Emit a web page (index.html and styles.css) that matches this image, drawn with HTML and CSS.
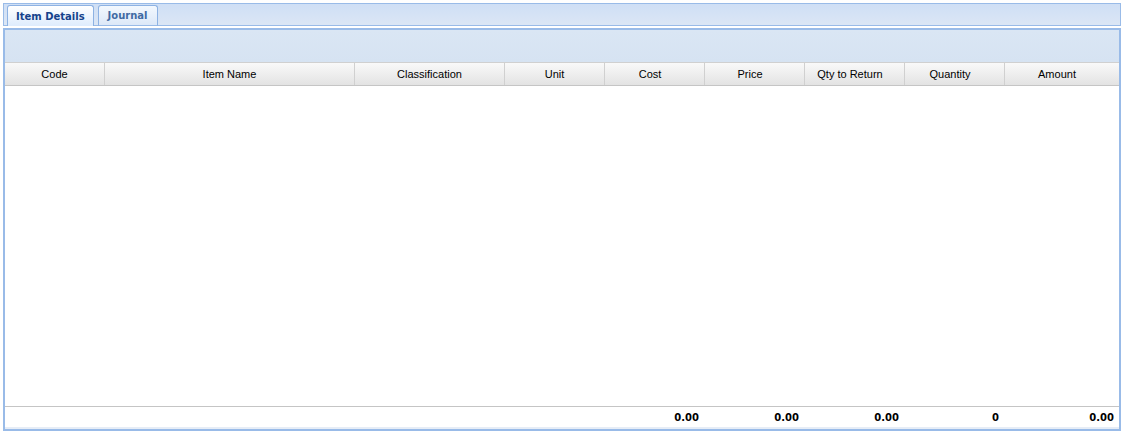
FILE: index.html
```html
<!DOCTYPE html>
<html>
<head>
<meta charset="utf-8">
<link rel="stylesheet" href="styles.css">
</head>
<body>
<div class="wrap">
  <div class="tabstrip">
    <div class="tab active">Item Details</div>
    <div class="tab">Journal</div>
  </div>
  <div class="panel">
    <div class="toolbar"></div>
    <div class="grid-head">
      <div class="hc">Code</div>
      <div class="hc">Item Name</div>
      <div class="hc">Classification</div>
      <div class="hc">Unit</div>
      <div class="hc num">Cost</div>
      <div class="hc num">Price</div>
      <div class="hc num">Qty to Return</div>
      <div class="hc num">Quantity</div>
      <div class="hc last">Amount</div>
    </div>
    <div class="grid-body"></div>
    <div class="grid-foot">
      <div class="fc"></div>
      <div class="fc"></div>
      <div class="fc"></div>
      <div class="fc"></div>
      <div class="fc">0.00</div>
      <div class="fc">0.00</div>
      <div class="fc">0.00</div>
      <div class="fc">0</div>
      <div class="fc amt">0.00</div>
    </div>
  </div>
</div>
</body>
</html>
```
FILE: styles.css
```css
html, body {
  margin: 0;
  padding: 0;
  background: #ffffff;
}
body {
  width: 1126px;
  height: 433px;
  overflow: hidden;
  font-family: "Liberation Sans", Arial, sans-serif;
}
.wrap {
  padding: 3px 5px 0 3px;
}
.tabstrip {
  height: 21px;
  border: 1px solid #99bbe8;
  background: linear-gradient(#cfdff5, #dbe6f5);
  display: flex;
  align-items: flex-end;
  gap: 4px;
  padding-left: 3px;
}
.tab {
  height: 21px;
  box-sizing: border-box;
  padding: 0 9px;
  margin-bottom: -1px;
  border: 1px solid #8db2e3;
  border-bottom: 1px solid #99bbe8;
  border-radius: 3px 3px 0 0;
  background: linear-gradient(#f3f8fe, #dce8f8);
  color: #416aa3;
  font-family: "DejaVu Sans", sans-serif;
  font-weight: bold;
  font-size: 10px;
  line-height: 20px;
}
.tab.active {
  padding: 0 8px;
  border-bottom: none;
  line-height: 21px;
  background: linear-gradient(#ffffff, #deecfd);
  color: #15428b;
}
.panel {
  margin-top: 2px;
  border: 2px solid #99bbe8;
  height: 399px;
  display: flex;
  flex-direction: column;
  background: #fff;
}
.toolbar {
  height: 32px;
  background: linear-gradient(#dae6f4, #d6e3f2);
  flex: none;
}
.grid-head, .grid-foot {
  display: grid;
  grid-template-columns: 100px 250px 150px 100px 100px 100px 100px 100px 1fr;
  flex: none;
}
.grid-head {
  height: 22px;
  background: linear-gradient(#f9f9f9, #e3e3e3);
  border-bottom: 1px solid #c5c5c5;
  border-top: 1px solid #d0d0d0;
}
.hc {
  font-size: 11px;
  color: #000;
  text-align: center;
  line-height: 22px;
  border-right: 1px solid #d0d0d0;
}
.hc.num {
  padding-right: 9px;
}
.hc.last {
  border-right: none;
  padding-right: 10px;
}
.grid-body {
  flex: 1;
  background: #fff;
}
.grid-foot {
  height: 20px;
  border-top: 1px solid #c5c5c5;
  border-bottom: 2px solid #e6edf7;
}
.fc {
  font-family: "DejaVu Sans", sans-serif;
  font-weight: bold;
  font-size: 10px;
  text-align: right;
  line-height: 22px;
  padding-right: 6px;
  color: #000;
}
.fc.amt {
  padding-right: 5px;
}
```
